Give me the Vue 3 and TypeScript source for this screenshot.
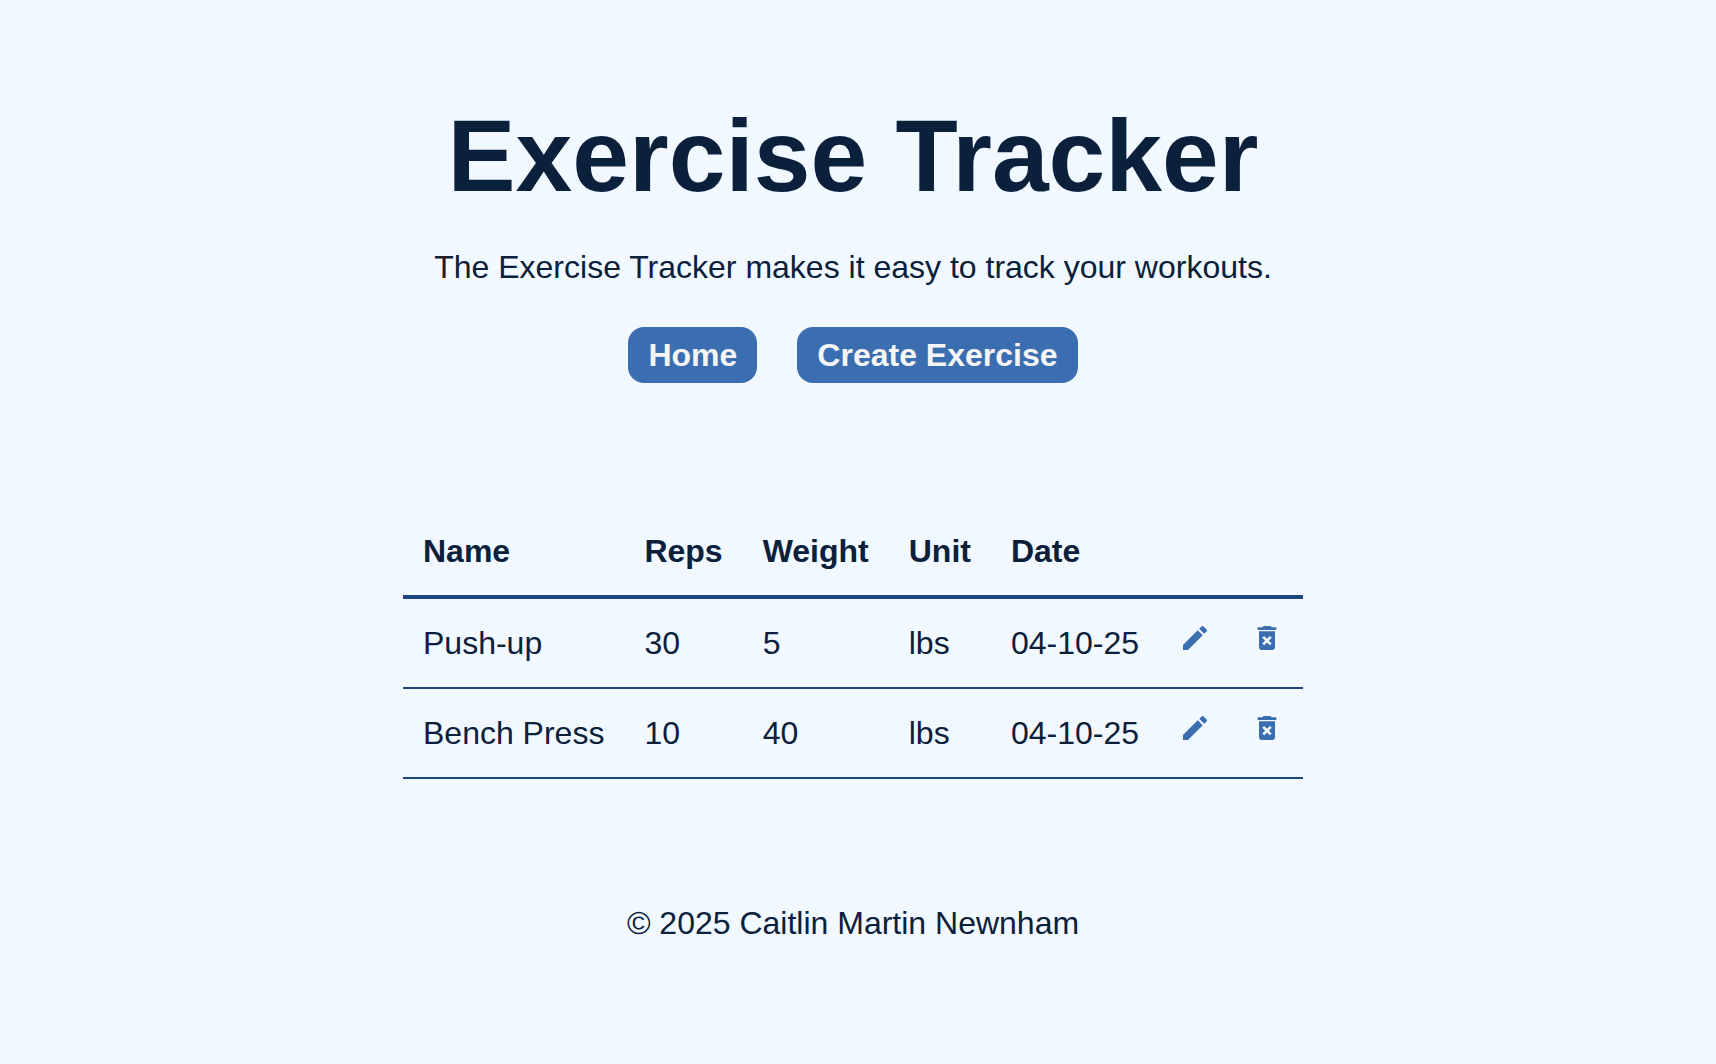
<script setup lang="ts">
import { ref } from 'vue'

interface Exercise {
  id: number
  name: string
  reps: number
  weight: number
  unit: string
  date: string
}

const exercises = ref<Exercise[]>([
  { id: 1, name: 'Push-up', reps: 30, weight: 5, unit: 'lbs', date: '04-10-25' },
  { id: 2, name: 'Bench Press', reps: 10, weight: 40, unit: 'lbs', date: '04-10-25' },
])

function removeExercise(id: number) {
  exercises.value = exercises.value.filter((exercise) => exercise.id !== id)
}
</script>

<template>
  <div class="app">
    <header>
      <h1>Exercise Tracker</h1>
      <p>The Exercise Tracker makes it easy to track your workouts.</p>
    </header>
    <nav>
      <a href="#/">Home</a>
      <a href="#/create">Create Exercise</a>
    </nav>
    <main>
      <table>
        <thead>
          <tr>
            <th scope="col">Name</th>
            <th scope="col">Reps</th>
            <th scope="col">Weight</th>
            <th scope="col">Unit</th>
            <th scope="col">Date</th>
            <td></td>
            <td></td>
          </tr>
        </thead>
        <tbody>
          <tr v-for="exercise in exercises" :key="exercise.id">
            <td>{{ exercise.name }}</td>
            <td>{{ exercise.reps }}</td>
            <td>{{ exercise.weight }}</td>
            <td>{{ exercise.unit }}</td>
            <td>{{ exercise.date }}</td>
            <td class="action">
              <button type="button" :aria-label="`Edit ${exercise.name}`">
                <svg viewBox="0 0 24 24" aria-hidden="true">
                  <path d="M3 17.25V21h3.75L17.81 9.94l-3.75-3.75L3 17.25zM20.71 7.04c.39-.39.39-1.02 0-1.41l-2.34-2.34c-.39-.39-1.02-.39-1.41 0l-1.83 1.83 3.75 3.75 1.83-1.83z" />
                </svg>
              </button>
            </td>
            <td class="action">
              <button type="button" :aria-label="`Delete ${exercise.name}`" @click="removeExercise(exercise.id)">
                <svg viewBox="0 0 24 24" aria-hidden="true">
                  <path d="M6 19c0 1.1.9 2 2 2h8c1.1 0 2-.9 2-2V7H6v12zm2.46-7.12l1.41-1.41L12 12.59l2.12-2.12 1.41 1.41L13.41 14l2.12 2.12-1.41 1.41L12 15.41l-2.12 2.12-1.41-1.41L10.59 14l-2.13-2.12zM15.5 4l-1-1h-5l-1 1H5v2h14V4z" />
                </svg>
              </button>
            </td>
          </tr>
        </tbody>
      </table>
    </main>
    <footer>
      <p>© 2025 Caitlin Martin Newnham</p>
    </footer>
  </div>
</template>

<style>
body {
  margin: 0;
  background: #f1f8ff;
}
</style>

<style scoped>
.app {
  display: flex;
  flex-direction: column;
  align-items: center;
  padding: 96px 10px 96px 0;
  color: #0a203b;
  font-family: Arial, "Liberation Sans", sans-serif;
  font-size: 32px;
  line-height: 36px;
  text-align: center;
}

h1 {
  margin: 0 0 33px;
  font-size: 102px;
  line-height: 120px;
}

p {
  margin: 0;
}

nav {
  display: flex;
  gap: 40px;
  margin: 42px 0 124px;
}

nav a {
  padding: 10px 20px;
  border-radius: 16px;
  background: #3b6eb0;
  color: #f5f5f5;
  font-weight: bold;
  text-decoration: none;
}

table {
  border-collapse: separate;
  border-spacing: 0;
  text-align: left;
}

th,
td {
  padding: 26px 20px;
  border-bottom: 2px solid #1f467a;
}

thead th,
thead td {
  border-bottom-width: 4px;
}

.action {
  padding: 23px 20px;
  vertical-align: top;
}

button {
  display: block;
  padding: 0;
  border: 0;
  background: none;
  color: #3b6eb0;
  cursor: pointer;
}

svg {
  display: block;
  width: 32px;
  height: 32px;
  fill: currentColor;
}

footer {
  margin-top: 126px;
}
</style>
